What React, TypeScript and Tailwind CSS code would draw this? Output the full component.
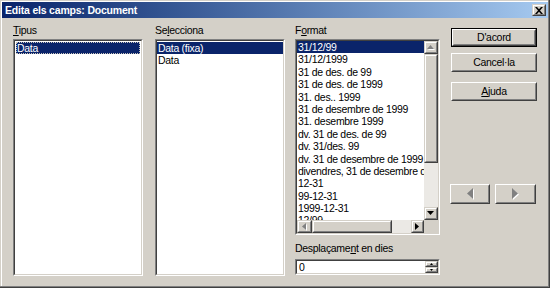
import React from "react";

const formats = [
  "31/12/99",
  "31/12/1999",
  "31 de des. de 99",
  "31 de des. de 1999",
  "31. des.. 1999",
  "31 de desembre de 1999",
  "31. desembre 1999",
  "dv. 31 de des. de 99",
  "dv. 31/des. 99",
  "dv. 31 de desembre de 1999",
  "divendres, 31 de desembre de 1999",
  "12-31",
  "99-12-31",
  "1999-12-31",
  "12/99",
];

type Dir = "up" | "down" | "left" | "right";

function Arrow({ dir, disabled, size = 4 }: { dir: Dir; disabled?: boolean; size?: number }) {
  const s = size;
  let pts = "";
  let w = s * 2 - 1;
  let h = s;
  if (dir === "up") pts = `${s - 0.5},0 ${w},${s} 0,${s}`;
  if (dir === "down") pts = `0,0 ${w},0 ${s - 0.5},${s}`;
  if (dir === "left" || dir === "right") {
    w = s;
    h = s * 2 - 1;
    pts = dir === "left" ? `${s},0 ${s},${h} 0,${s - 0.5}` : `0,0 ${s},${s - 0.5} 0,${h}`;
  }
  return (
    <svg width={w + 1} height={h + 1} viewBox={`0 0 ${w + 1} ${h + 1}`}>
      {disabled && <polygon points={pts} fill="#ffffff" transform="translate(1,1)" />}
      <polygon points={pts} fill={disabled ? "#808080" : "#000000"} />
    </svg>
  );
}

function ScrollBtn({ className = "", children }: { className?: string; children?: React.ReactNode }) {
  return (
    <div className={`border border-t-[#d4d0c8] border-l-[#d4d0c8] border-b-[#404040] border-r-[#404040] bg-[#d4d0c8] ${className}`}>
      <div className="flex h-full w-full items-center justify-center border border-t-white border-l-white border-b-[#808080] border-r-[#808080]">
        {children}
      </div>
    </div>
  );
}

function Button({ children, isDefault, className = "" }: { children?: React.ReactNode; isDefault?: boolean; className?: string }) {
  const inner = (
    <div className="h-full w-full border border-t-white border-l-white border-b-[#404040] border-r-[#404040]">
      <div className="flex h-full w-full items-center justify-center border border-t-[#d4d0c8] border-l-[#d4d0c8] border-b-[#808080] border-r-[#808080]">
        {children}
      </div>
    </div>
  );
  if (isDefault) {
    return <div className={`border border-black ${className}`}>{inner}</div>;
  }
  return <div className={className}>{inner}</div>;
}

function Sunken({ className = "", children }: { className?: string; children?: React.ReactNode }) {
  return (
    <div className={`border border-t-[#808080] border-l-[#808080] border-b-white border-r-white ${className}`}>
      <div className="h-full w-full overflow-hidden border border-t-[#404040] border-l-[#404040] border-b-[#d4d0c8] border-r-[#d4d0c8] bg-white">
        {children}
      </div>
    </div>
  );
}

function Row({ text, selected, focus }: { text: string; selected?: boolean; focus?: boolean }) {
  return (
    <div
      className={`h-[12.4px] whitespace-nowrap pl-[1px] leading-[12.4px] ${
        selected ? "bg-[#0a246a] text-white" : "text-black"
      } ${focus ? "outline outline-1 outline-dotted outline-[#c8c4bc] -outline-offset-1" : ""}`}
    >
      {text}
    </div>
  );
}

export default function App() {
  return (
    <div
      className="relative h-[288px] w-[550px] overflow-hidden bg-[#d4d0c8] p-[2px] text-[10.5px] tracking-[-0.3px] text-black shadow-[inset_-1px_-1px_#404040,inset_-2px_-2px_#808080,inset_1px_1px_#d4d0c8,inset_2px_2px_#ffffff]"
      style={{ fontFamily: '"Liberation Sans", Arial, sans-serif' }}
    >
      {/* title bar */}
      <div className="flex h-[16px] items-center justify-between bg-gradient-to-r from-[#0a246a] to-[#a6caf0] pl-[3px] pr-[2px]">
        <span className="text-[10.5px] font-bold leading-none tracking-[-0.2px] text-white">
          Edita els camps: Document
        </span>
        <ScrollBtn className="h-[12px] w-[14px]">
          <svg width="8" height="7" viewBox="0 0 8 7">
            <path d="M0 0h2l2 2.2L6 0h2L5 3.5 8 7H6L4 4.8 2 7H0l3-3.5z" fill="#000" />
          </svg>
        </ScrollBtn>
      </div>

      <div className="flex pl-[11px] pt-[6px]">
        {/* Tipus */}
        <div className="flex w-[130px] flex-col">
          <div className="h-[12px] leading-[12px]">
            <span className="underline">T</span>ipus
          </div>
          <Sunken className="mt-[3px] h-[237px]">
            <div className="p-[1px]">
              <Row text="Data" selected focus />
            </div>
          </Sunken>
        </div>

        {/* Selecciona */}
        <div className="ml-[12px] flex w-[130px] flex-col">
          <div className="h-[12px] leading-[12px]">
            Se<span className="underline">l</span>ecciona
          </div>
          <Sunken className="mt-[3px] h-[237px]">
            <div className="py-[1px]">
              <Row text="Data (fixa)" selected />
              <Row text="Data" />
            </div>
          </Sunken>
        </div>

        {/* Format */}
        <div className="ml-[10px] flex w-[145px] flex-col">
          <div className="h-[12px] leading-[12px]">
            F<span className="underline">o</span>rmat
          </div>
          <Sunken className="mt-[3px] h-[196px]">
            <div className="flex h-full flex-col">
              <div className="flex min-h-0 flex-1">
                <div className="min-w-0 flex-1 overflow-hidden">
                  {formats.map((f, i) => (
                    <Row key={f} text={f} selected={i === 0} />
                  ))}
                </div>
                <div className="flex w-[14px] flex-col">
                  <ScrollBtn className="h-[13px]">
                    <Arrow dir="up" disabled />
                  </ScrollBtn>
                  <ScrollBtn className="h-[109px]" />
                  <div className="flex-1 bg-[#ebe9e5]" />
                  <ScrollBtn className="h-[13px]">
                    <Arrow dir="down" />
                  </ScrollBtn>
                </div>
              </div>
              <div className="flex h-[13px]">
                <ScrollBtn className="w-[15px]">
                  <Arrow dir="left" disabled />
                </ScrollBtn>
                <ScrollBtn className="w-[80px]" />
                <div className="flex-1 bg-[#ebe9e5]" />
                <ScrollBtn className="w-[13px]">
                  <Arrow dir="right" />
                </ScrollBtn>
                <div className="w-[14px] bg-[#d4d0c8]" />
              </div>
            </div>
          </Sunken>

          <div className="mt-[7px] h-[12px] leading-[12px]">
            Desplaçame<span className="underline">n</span>t en dies
          </div>
          <Sunken className="mt-[5px] h-[16px]">
            <div className="flex h-full">
              <div className="flex-1 pl-[2px] leading-[12px]">0</div>
              <div className="flex w-[13px] flex-col">
                <ScrollBtn className="h-[6px]">
                  <Arrow dir="up" size={2} />
                </ScrollBtn>
                <ScrollBtn className="h-[6px]">
                  <Arrow dir="down" size={2} />
                </ScrollBtn>
              </div>
            </div>
          </Sunken>
        </div>

        {/* buttons */}
        <div className="ml-[10px] flex w-[87px] flex-col pt-[4px]">
          <Button isDefault className="ml-[1px] h-[19px]">
            D'acord
          </Button>
          <Button className="ml-[1px] mt-[6px] h-[19px]">Cancel·la</Button>
          <Button className="ml-[1px] mt-[10px] h-[19px]">
            <span>
              <span className="underline">A</span>juda
            </span>
          </Button>
          <div className="mt-[83px] flex gap-[5px]">
            <Button className="h-[20px] w-[40px]">
              <Arrow dir="left" disabled size={6} />
            </Button>
            <Button className="h-[20px] w-[41px]">
              <Arrow dir="right" disabled size={6} />
            </Button>
          </div>
        </div>
      </div>
    </div>
  );
}
